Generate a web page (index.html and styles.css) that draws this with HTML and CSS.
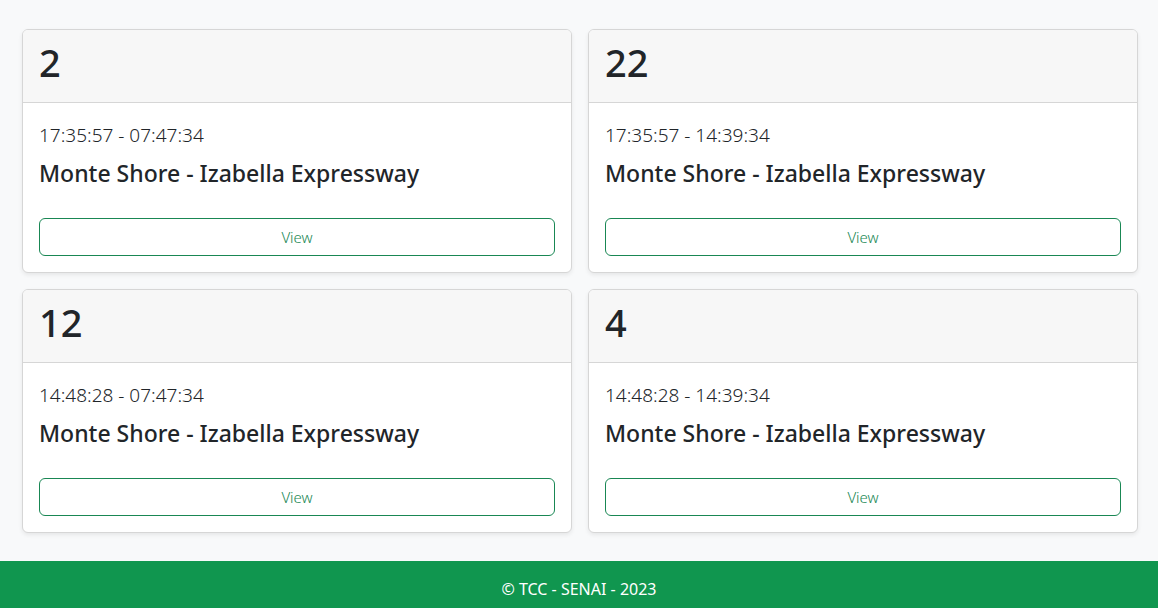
FILE: index.html
```html
<!DOCTYPE html>
<html lang="pt-br">
<head>
<meta charset="utf-8">
<title>Viagens</title>
<link rel="stylesheet" href="styles.css">
</head>
<body>
<main class="content">
  <div class="grid">
    <div class="card">
      <div class="card-header"><h1 class="card-num">2</h1></div>
      <div class="card-body">
        <p class="time">17:35:57 - 07:47:34</p>
        <h4 class="route">Monte Shore - Izabella Expressway</h4>
        <button class="btn">View</button>
      </div>
    </div>
    <div class="card">
      <div class="card-header"><h1 class="card-num">22</h1></div>
      <div class="card-body">
        <p class="time">17:35:57 - 14:39:34</p>
        <h4 class="route">Monte Shore - Izabella Expressway</h4>
        <button class="btn">View</button>
      </div>
    </div>
    <div class="card">
      <div class="card-header"><h1 class="card-num">12</h1></div>
      <div class="card-body">
        <p class="time">14:48:28 - 07:47:34</p>
        <h4 class="route">Monte Shore - Izabella Expressway</h4>
        <button class="btn">View</button>
      </div>
    </div>
    <div class="card">
      <div class="card-header"><h1 class="card-num">4</h1></div>
      <div class="card-body">
        <p class="time">14:48:28 - 14:39:34</p>
        <h4 class="route">Monte Shore - Izabella Expressway</h4>
        <button class="btn">View</button>
      </div>
    </div>
  </div>
</main>
<footer class="footer">© TCC - SENAI - 2023</footer>
</body>
</html>
```

FILE: styles.css
```css
* { box-sizing: border-box; }
html, body { margin: 0; padding: 0; }
body {
  background: #f8f9fa;
  color: #212529;
  font-family: "Noto Sans", "Open Sans", sans-serif;
}
.content {
  padding: 29px 20px 28px 22px;
}
.grid {
  display: grid;
  grid-template-columns: 1fr 1fr;
  column-gap: 16px;
  row-gap: 16px;
}
.card {
  background: #fff;
  border: 1px solid #d6d6d6;
  border-radius: 6px;
  box-shadow: 0 2px 4px rgba(0,0,0,0.075);
  overflow: hidden;
}
.card-header {
  background: #f7f7f7;
  border-bottom: 1px solid #d6d6d6;
  padding: 8px 16px;
  height: 73px;
}
.card-num {
  margin: 0;
  font-size: 38px;
  font-weight: 500;
  line-height: 48px;
}
.card-body {
  padding: 16px;
}
.time {
  margin: 4px 0 0;
  font-size: 19px;
  font-weight: 300;
  line-height: 24px;
}
.route {
  margin: 12px 0 0;
  font-size: 23px;
  font-weight: 500;
  line-height: 28px;
}
.btn {
  display: block;
  width: 100%;
  height: 38px;
  margin-top: 31px;
  background: #fff;
  border: 1px solid #198754;
  border-radius: 6px;
  color: #198754;
  font-family: inherit;
  font-size: 15px;
  font-weight: 300;
}
.footer {
  background: #10964f;
  color: #fff;
  text-align: center;
  font-size: 16px;
  line-height: 24px;
  padding: 16px 0;
}
```
